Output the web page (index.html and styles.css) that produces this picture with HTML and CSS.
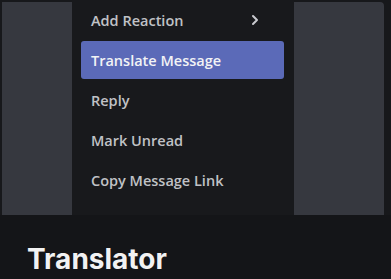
FILE: index.html
```html
<!DOCTYPE html>
<html>
<head>
<meta charset="utf-8">
<link rel="stylesheet" href="styles.css">
</head>
<body>
<div class="stage">
  <div class="panel"></div>
  <div class="menu">
    <div class="item"><span>Add Reaction</span>
      <svg class="chev" width="10" height="12" viewBox="0 0 10 12"><path d="M3 2 L7 6 L3 10" fill="none" stroke="#c9cacf" stroke-width="2" stroke-linecap="round" stroke-linejoin="round"/></svg>
    </div>
    <div class="item active"><span>Translate Message</span></div>
    <div class="item"><span>Reply</span></div>
    <div class="item"><span>Mark Unread</span></div>
    <div class="item"><span>Copy Message Link</span></div>
    <div class="item"><span>Speak Message</span></div>
  </div>
</div>
<div class="footer">
  <h1 class="title">Translator</h1>
</div>
</body>
</html>
```
FILE: styles.css
```css
html, body {
  margin: 0;
  padding: 0;
  background: #141518;
}
body {
  width: 391px;
  height: 279px;
  overflow: hidden;
}
.stage {
  position: relative;
  height: 215px;
  background: #17181b;
  padding: 2px 7px 0 2px;
  box-sizing: border-box;
  display: flex;
}
.panel {
  flex: 1;
  background: #36383f;
  border-radius: 0 4px 0 0;
}
.menu {
  position: absolute;
  left: 72px;
  top: 0;
  width: 222px;
  height: 215px;
  background: #18191c;
  box-sizing: border-box;
  padding: 1px 10px 0 9px;
  overflow: hidden;
  font-family: "Open Sans", sans-serif;
  font-weight: 600;
  font-size: 14.5px;
  color: #c0c2c6;
}
.item {
  height: 38px;
  margin-bottom: 2px;
  padding: 0 10px;
  display: flex;
  align-items: center;
  justify-content: space-between;
  border-radius: 3px;
}
.item.active {
  background: #5b6ab8;
  color: #f2f3f5;
}
.chev {
  margin-right: 14px;
}
.footer {
  height: 64px;
  background: #141518;
  padding: 0 27px;
  display: flex;
  align-items: flex-start;
}
.title {
  margin: 27px 0 0 0;
  font-family: Inter, sans-serif;
  font-weight: 700;
  font-size: 28px;
  line-height: 34px;
  color: #f2f2f2;
}
```
